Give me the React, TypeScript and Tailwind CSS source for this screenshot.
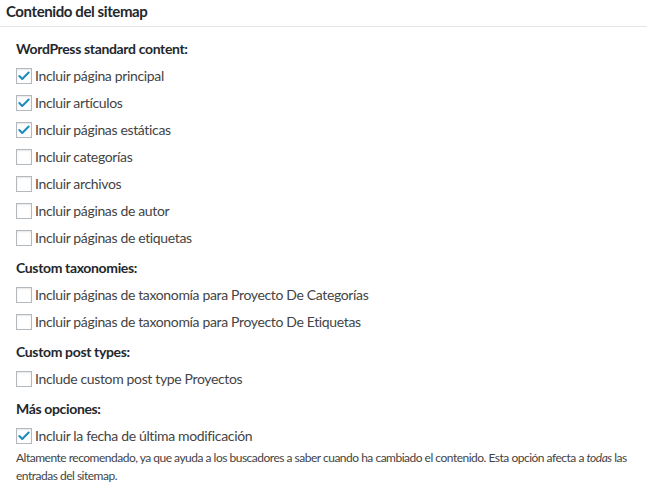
import { Check } from "lucide-react";

type Item = { label: string; checked?: boolean };

const SECTIONS: { title: string; items: Item[] }[] = [
  {
    title: "WordPress standard content:",
    items: [
      { label: "Incluir página principal", checked: true },
      { label: "Incluir artículos", checked: true },
      { label: "Incluir páginas estáticas", checked: true },
      { label: "Incluir categorías" },
      { label: "Incluir archivos" },
      { label: "Incluir páginas de autor" },
      { label: "Incluir páginas de etiquetas" },
    ],
  },
  {
    title: "Custom taxonomies:",
    items: [
      { label: "Incluir páginas de taxonomía para Proyecto De Categorías" },
      { label: "Incluir páginas de taxonomía para Proyecto De Etiquetas" },
    ],
  },
  {
    title: "Custom post types:",
    items: [{ label: "Include custom post type Proyectos" }],
  },
];

function Box({ checked }: { checked?: boolean }) {
  return (
    <span className="flex h-4 w-4 shrink-0 items-center justify-center border border-[#b4b9be] bg-white shadow-[inset_0_1px_2px_rgba(0,0,0,0.1)]">
      {checked && <Check size={14} strokeWidth={3.5} className="text-[#1e8cbe]" />}
    </span>
  );
}

function Row({ label, checked }: Item) {
  return (
    <label className="flex h-[27px] items-center gap-[3px]">
      <Box checked={checked} />
      <span>{label}</span>
    </label>
  );
}

export default function App() {
  return (
    <div
      className="min-h-screen w-full bg-white text-[14px] tracking-[-0.35px] text-[#444]"
      style={{ fontFamily: 'Lato, "Noto Sans", sans-serif' }}
    >
      {/* header */}
      <div className="flex h-[27px] items-start border-b border-[#e5e5e5] px-[6px]">
        <h2 className="text-[15px] font-bold leading-[23px] tracking-[-0.4px] text-[#23282d]">Contenido del sitemap</h2>
      </div>

      <div className="px-4 pt-[8px]">
        {SECTIONS.map((s) => (
          <div key={s.title} className="mb-[3px]">
            <p className="flex h-[27px] items-center font-bold tracking-[-0.35px] text-[#23282d]">{s.title}</p>
            {s.items.map((it) => (
              <Row key={it.label} {...it} />
            ))}
          </div>
        ))}

        <p className="flex h-[27px] items-center font-bold tracking-[-0.35px] text-[#23282d]">Más opciones:</p>
        <Row label="Incluir la fecha de última modificación" checked />
        <p className="-mr-4 text-[12px] leading-[18px] tracking-[-0.5px] text-[#444]">
          Altamente recomendado, ya que ayuda a los buscadores a saber cuando ha cambiado el contenido. Esta opción afecta a{" "}
          <em>todas</em> las entradas del sitemap.
        </p>
      </div>
    </div>
  );
}
